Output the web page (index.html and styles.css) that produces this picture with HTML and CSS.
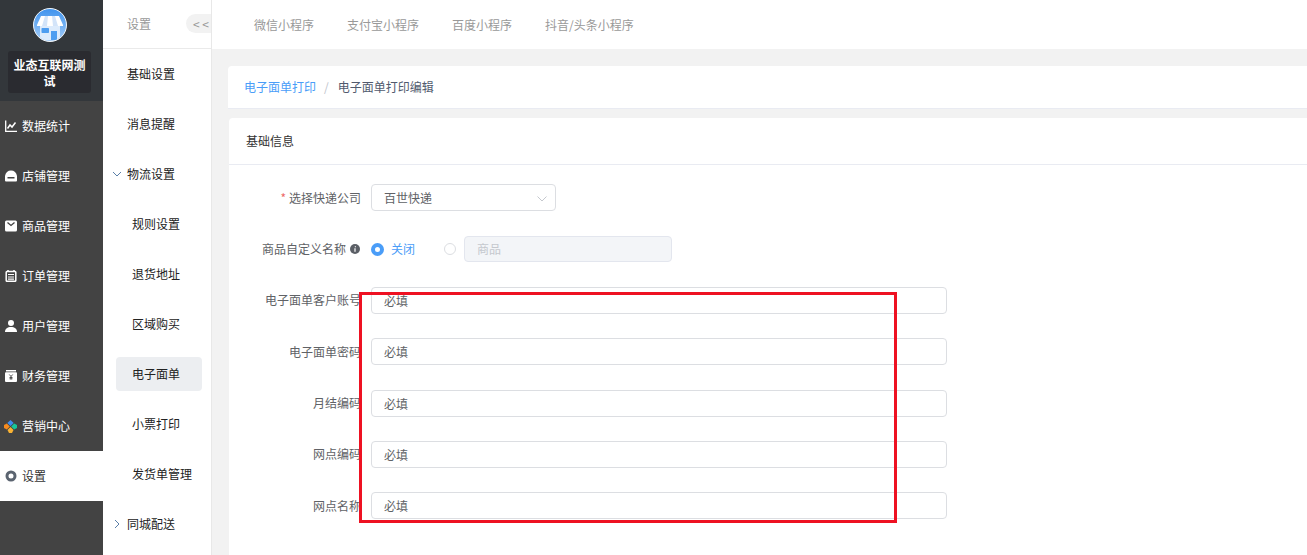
FILE: index.html
```html
<!DOCTYPE html>
<html lang="zh">
<head>
<meta charset="utf-8">
<title>电子面单打印编辑</title>
<link rel="stylesheet" href="styles.css">
</head>
<body>
<div class="app">
  <aside class="rail">
    <div class="brand">
      <svg class="avatar" viewBox="0 0 34 34">
        <defs>
          <linearGradient id="sky" x1="0" y1="0" x2="0" y2="1"><stop offset="0" stop-color="#3f93ee"/><stop offset="1" stop-color="#a5cdf8"/></linearGradient>
          <clipPath id="disc"><circle cx="17" cy="17" r="16"/></clipPath>
        </defs>
        <circle cx="17" cy="17" r="16.500" fill="url(#sky)" stroke="#f4f6f8" stroke-width="1"/>
        <g clip-path="url(#disc)">
          <rect x="7" y="17" width="20" height="15" fill="#dcebfc"/>
          <path d="M8 8h18l4 9v1H4v-1z" fill="#fff"/>
          <path d="M12 8h3l-1 10H9zM19 8h3l3 10h-5z" fill="#d3e4f9"/>
          <rect x="8.500" y="20" width="7.500" height="5" rx=".8" fill="#4d9df0"/>
          <rect x="18" y="23" width="6" height="9" fill="#4d9df0"/>
        </g>
      </svg>
      <div class="brand-name">业态互联网测试</div>
    </div>
    <nav class="rail-menu">
      <a class="rail-item">
        <svg class="rail-icon" viewBox="0 0 12 12"><path d="M.7 .5v10.800H12" fill="none" stroke="#fff" stroke-width="1.300"/><path d="M2.500 8.500 5 5l2 2 3.500-4.500" fill="none" stroke="#fff" stroke-width="1.500"/></svg>
        <span>数据统计</span>
      </a>
      <a class="rail-item">
        <svg class="rail-icon" viewBox="0 0 12 12"><path d="M0 6C.5 2.500 2.800.500 6 .500S11.500 2.500 12 6v4.500a1 1 0 0 1-1 1H1a1 1 0 0 1-1-1z" fill="#fff"/><rect x="2.500" y="7" width="7" height="1.500" fill="#434343"/></svg>
        <span>店铺管理</span>
      </a>
      <a class="rail-item">
        <svg class="rail-icon" viewBox="0 0 12 12"><rect x="0" y=".5" width="12" height="11" rx="1.500" fill="#fff"/><path d="M2.500 2.500 6 5.500l3.500-3" fill="none" stroke="#434343" stroke-width="1.300"/></svg>
        <span>商品管理</span>
      </a>
      <a class="rail-item">
        <svg class="rail-icon" viewBox="0 0 12 12"><path d="M3 0v2M9 0v2" stroke="#fff" stroke-width="1.500"/><rect x="1.200" y="1.500" width="9.600" height="9.800" rx=".8" fill="none" stroke="#fff" stroke-width="1.500"/><path d="M3 4.500h6M3 7h6M3 9.200h6" stroke="#fff" stroke-width="1.200"/></svg>
        <span>订单管理</span>
      </a>
      <a class="rail-item">
        <svg class="rail-icon" viewBox="0 0 12 12"><circle cx="6" cy="3" r="3" fill="#fff"/><path d="M0 12c0-3.200 2.500-5 6-5s6 1.800 6 5z" fill="#fff"/></svg>
        <span>用户管理</span>
      </a>
      <a class="rail-item">
        <svg class="rail-icon" viewBox="0 0 12 12"><rect x="1" y="0" width="10" height="1.500" fill="#fff"/><rect x="0" y="2.200" width="12" height="9.800" rx="1" fill="#fff"/><path d="M4.300 4.500 6 6.500l1.700-2M6 6.500v3M4.500 7.500h3M4.500 8.800h3" fill="none" stroke="#434343" stroke-width=".9"/></svg>
        <span>财务管理</span>
      </a>
      <a class="rail-item">
        <svg class="rail-icon is-wide" viewBox="0 0 13 13"><path d="M6.500 0 9.700 3 6.500 6 3.300 3z" fill="#3d8cf0"/><path d="M2.800 3.500 5.800 6.500 2.800 9.500 0 8V5z" fill="#f58a1f"/><path d="M10.200 3.500 13 5v3l-2.800 1.500-3-3z" fill="#16c79a"/><path d="M6.500 7 9.500 10 8 13H5L3.500 10z" fill="#f9b233"/></svg>
        <span>营销中心</span>
      </a>
      <a class="rail-item is-current">
        <svg class="rail-icon" viewBox="0 0 12 12"><circle cx="6" cy="6" r="4" fill="none" stroke="#5b6470" stroke-width="3"/></svg>
        <span>设置</span>
      </a>
    </nav>
  </aside>

  <aside class="submenu">
    <div class="submenu-head">
      <span class="submenu-title">设置</span>
      <span class="collapse">&lt; &lt;</span>
    </div>
    <a class="sub-item">基础设置</a>
    <a class="sub-item">消息提醒</a>
    <a class="sub-item">
      <svg class="caret" viewBox="0 0 10 10"><path d="M1 3l4 4 4-4" fill="none" stroke="#5a7fa8" stroke-width="1"/></svg>
      物流设置
    </a>
    <a class="sub-item is-child">规则设置</a>
    <a class="sub-item is-child">退货地址</a>
    <a class="sub-item is-child">区域购买</a>
    <a class="sub-item is-child is-active"><span class="pill">电子面单</span></a>
    <a class="sub-item is-child">小票打印</a>
    <a class="sub-item is-child">发货单管理</a>
    <a class="sub-item">
      <svg class="caret" viewBox="0 0 10 10"><path d="M3 1l4 4-4 4" fill="none" stroke="#5a7fa8" stroke-width="1"/></svg>
      同城配送
    </a>
  </aside>

  <main class="main">
    <div class="tabs">
      <a class="tab">微信小程序</a>
      <a class="tab">支付宝小程序</a>
      <a class="tab">百度小程序</a>
      <a class="tab">抖音/头条小程序</a>
    </div>
    <div class="crumbs">
      <a class="crumb-link">电子面单打印</a>
      <span class="crumb-sep">/</span>
      <span class="crumb-now">电子面单打印编辑</span>
    </div>
    <section class="card">
      <h2 class="card-head">基础信息</h2>
      <form class="form">
        <div class="row">
          <label class="label"><span class="req">*</span><span>选择快递公司</span></label>
          <div class="select">
            <span>百世快递</span>
            <svg class="select-arrow" viewBox="0 0 10 6"><path d="M.5.500 5 5 9.500.5" fill="none" stroke="#c5c8ce" stroke-width="1"/></svg>
          </div>
        </div>
        <div class="row">
          <label class="label"><span>商品自定义名称</span><svg class="info" viewBox="0 0 10 10"><circle cx="5" cy="5" r="5" fill="#5b5f66"/><path d="M5.400 2.200v1M5 4.300v3.500" stroke="#fff" stroke-width="1.200"/></svg></label>
          <span class="radio is-on"></span>
          <span class="radio-text">关闭</span>
          <span class="radio"></span>
          <div class="disabled-input">商品</div>
        </div>
        <div class="row"><label class="label">电子面单客户账号</label><input class="input" placeholder="必填"></div>
        <div class="row"><label class="label">电子面单密码</label><input class="input" placeholder="必填"></div>
        <div class="row"><label class="label">月结编码</label><input class="input" placeholder="必填"></div>
        <div class="row"><label class="label">网点编码</label><input class="input" placeholder="必填"></div>
        <div class="row"><label class="label">网点名称</label><input class="input" placeholder="必填"></div>
      </form>
    </section>
  </main>
</div>
<div class="annotation"></div>
</body>
</html>
```

FILE: styles.css
```css
* { box-sizing: border-box; }
html, body { margin: 0; height: 555px; overflow: hidden; }
body { font: 12px/1.500 "Noto Sans CJK SC", "Liberation Sans", sans-serif; color: #333; background: #f2f2f2; }
.app { display: flex; height: 555px; }

.rail { width: 103px; flex: none; background: #434343; display: flex; flex-direction: column; }
.brand { height: 101px; background: #33373b; padding-top: 8px; display: flex; flex-direction: column; align-items: center; }
.avatar { width: 34px; height: 34px; display: block; margin-left: -4px; }
.brand-name { width: 83px; height: 42px; margin-top: 9px; margin-left: -4px; padding: 1px 3px 0; border-radius: 3px; background: #2a2b30; color: #fff; font-weight: 700; line-height: 16px; text-align: center; display: flex; align-items: center; }
.rail-item { height: 50px; display: flex; align-items: center; gap: 5px; padding-left: 5px; color: #fff; }
.rail-icon { width: 12px; height: 12px; flex: none; }
.rail-icon.is-wide { width: 13px; height: 13px; margin-left: -1px; }
.rail-item.is-current { background: #fff; color: #333; }

.submenu { width: 109px; flex: none; background: #fff; border-right: 1px solid #e8e8e8; }
.submenu-head { height: 49px; border-bottom: 1px solid #eaeaea; padding-left: 24px; display: flex; align-items: center; justify-content: space-between; }
.submenu-title { color: #999; }
.collapse { width: 25px; height: 19px; margin-top: -1px; padding-left: 7px; background: #f2f2f2; border-radius: 10px 0 0 10px; color: #999; font-size: 12px; line-height: 19px; white-space: nowrap; overflow: hidden; }
.sub-item { position: relative; height: 50px; display: flex; align-items: center; padding-left: 24px; color: #222; }
.sub-item.is-child { padding-left: 29px; }
.caret { position: absolute; left: 9px; top: 20px; width: 10px; height: 10px; }
.sub-item.is-active { padding-left: 13px; }
.pill { width: 86px; height: 34px; padding-left: 16px; line-height: 34px; background: #eceef1; border-radius: 4px; }

.main { flex: 1; min-width: 0; }
.tabs { height: 49px; background: #fff; display: flex; align-items: center; gap: 33px; padding: 0 0 0 42px; }
.tab { color: #999; }
.crumbs { height: 43px; margin: 17px 0 0 16px; padding-left: 16px; background: #fff; border-top-left-radius: 4px; border-bottom: 1px solid #e9ebf2; display: flex; align-items: center; gap: 7px; }
.crumb-link { color: #4a9df8; }
.crumb-sep { color: #c0c4cc; margin-left: 1px; }
.crumb-now { color: #515a6e; margin-left: 2px; }
.card { height: 437px; margin: 9px 0 0 17px; background: #fff; border-top-left-radius: 4px; }
.card-head { height: 47px; margin: 0; padding-left: 17px; border-bottom: 1px solid #e9ebf2; font-size: 12px; font-weight: 400; line-height: 46px; color: #333; }
.form { padding-top: 19.400px; display: flex; flex-direction: column; gap: 24.300px; }
.row { height: 27px; display: flex; align-items: center; }
.label { width: 132px; margin-right: 10px; flex: none; display: flex; justify-content: flex-end; align-items: center; gap: 3px; color: #606266; white-space: nowrap; }
.req { color: #ed6a6a; }
.info { width: 10px; height: 10px; margin: 0 1px 0 1px; }
.select { width: 185px; height: 27px; padding: 0 8px 0 12px; border: 1px solid #dcdee2; border-radius: 4px; display: flex; align-items: center; justify-content: space-between; color: #606266; }
.select-arrow { width: 10px; height: 6px; margin-top: 3px; }
.radio { width: 12px; height: 12px; border: 1px solid #dcdee2; border-radius: 50%; background: #fff; flex: none; }
.radio.is-on { width: 13px; height: 13px; border: 4px solid #4a9df8; }
.radio-text { width: 53px; margin-left: 7px; color: #4a9df8; }
.disabled-input { width: 208px; height: 26px; margin-left: 8px; padding-left: 12px; line-height: 24px; border: 1px solid #e3e6ee; border-radius: 4px; background: #f3f5f8; color: #c5c8ce; }
.input { width: 576px; height: 27px; padding: 0 12px; border: 1px solid #dcdee2; border-radius: 4px; background: #fff; font: inherit; color: #606266; outline: none; }
.input::placeholder { color: #606266; opacity: 1; }

.annotation { position: absolute; left: 359px; top: 292px; width: 538px; height: 231px; border: 3px solid #ee1122; pointer-events: none; }
```
